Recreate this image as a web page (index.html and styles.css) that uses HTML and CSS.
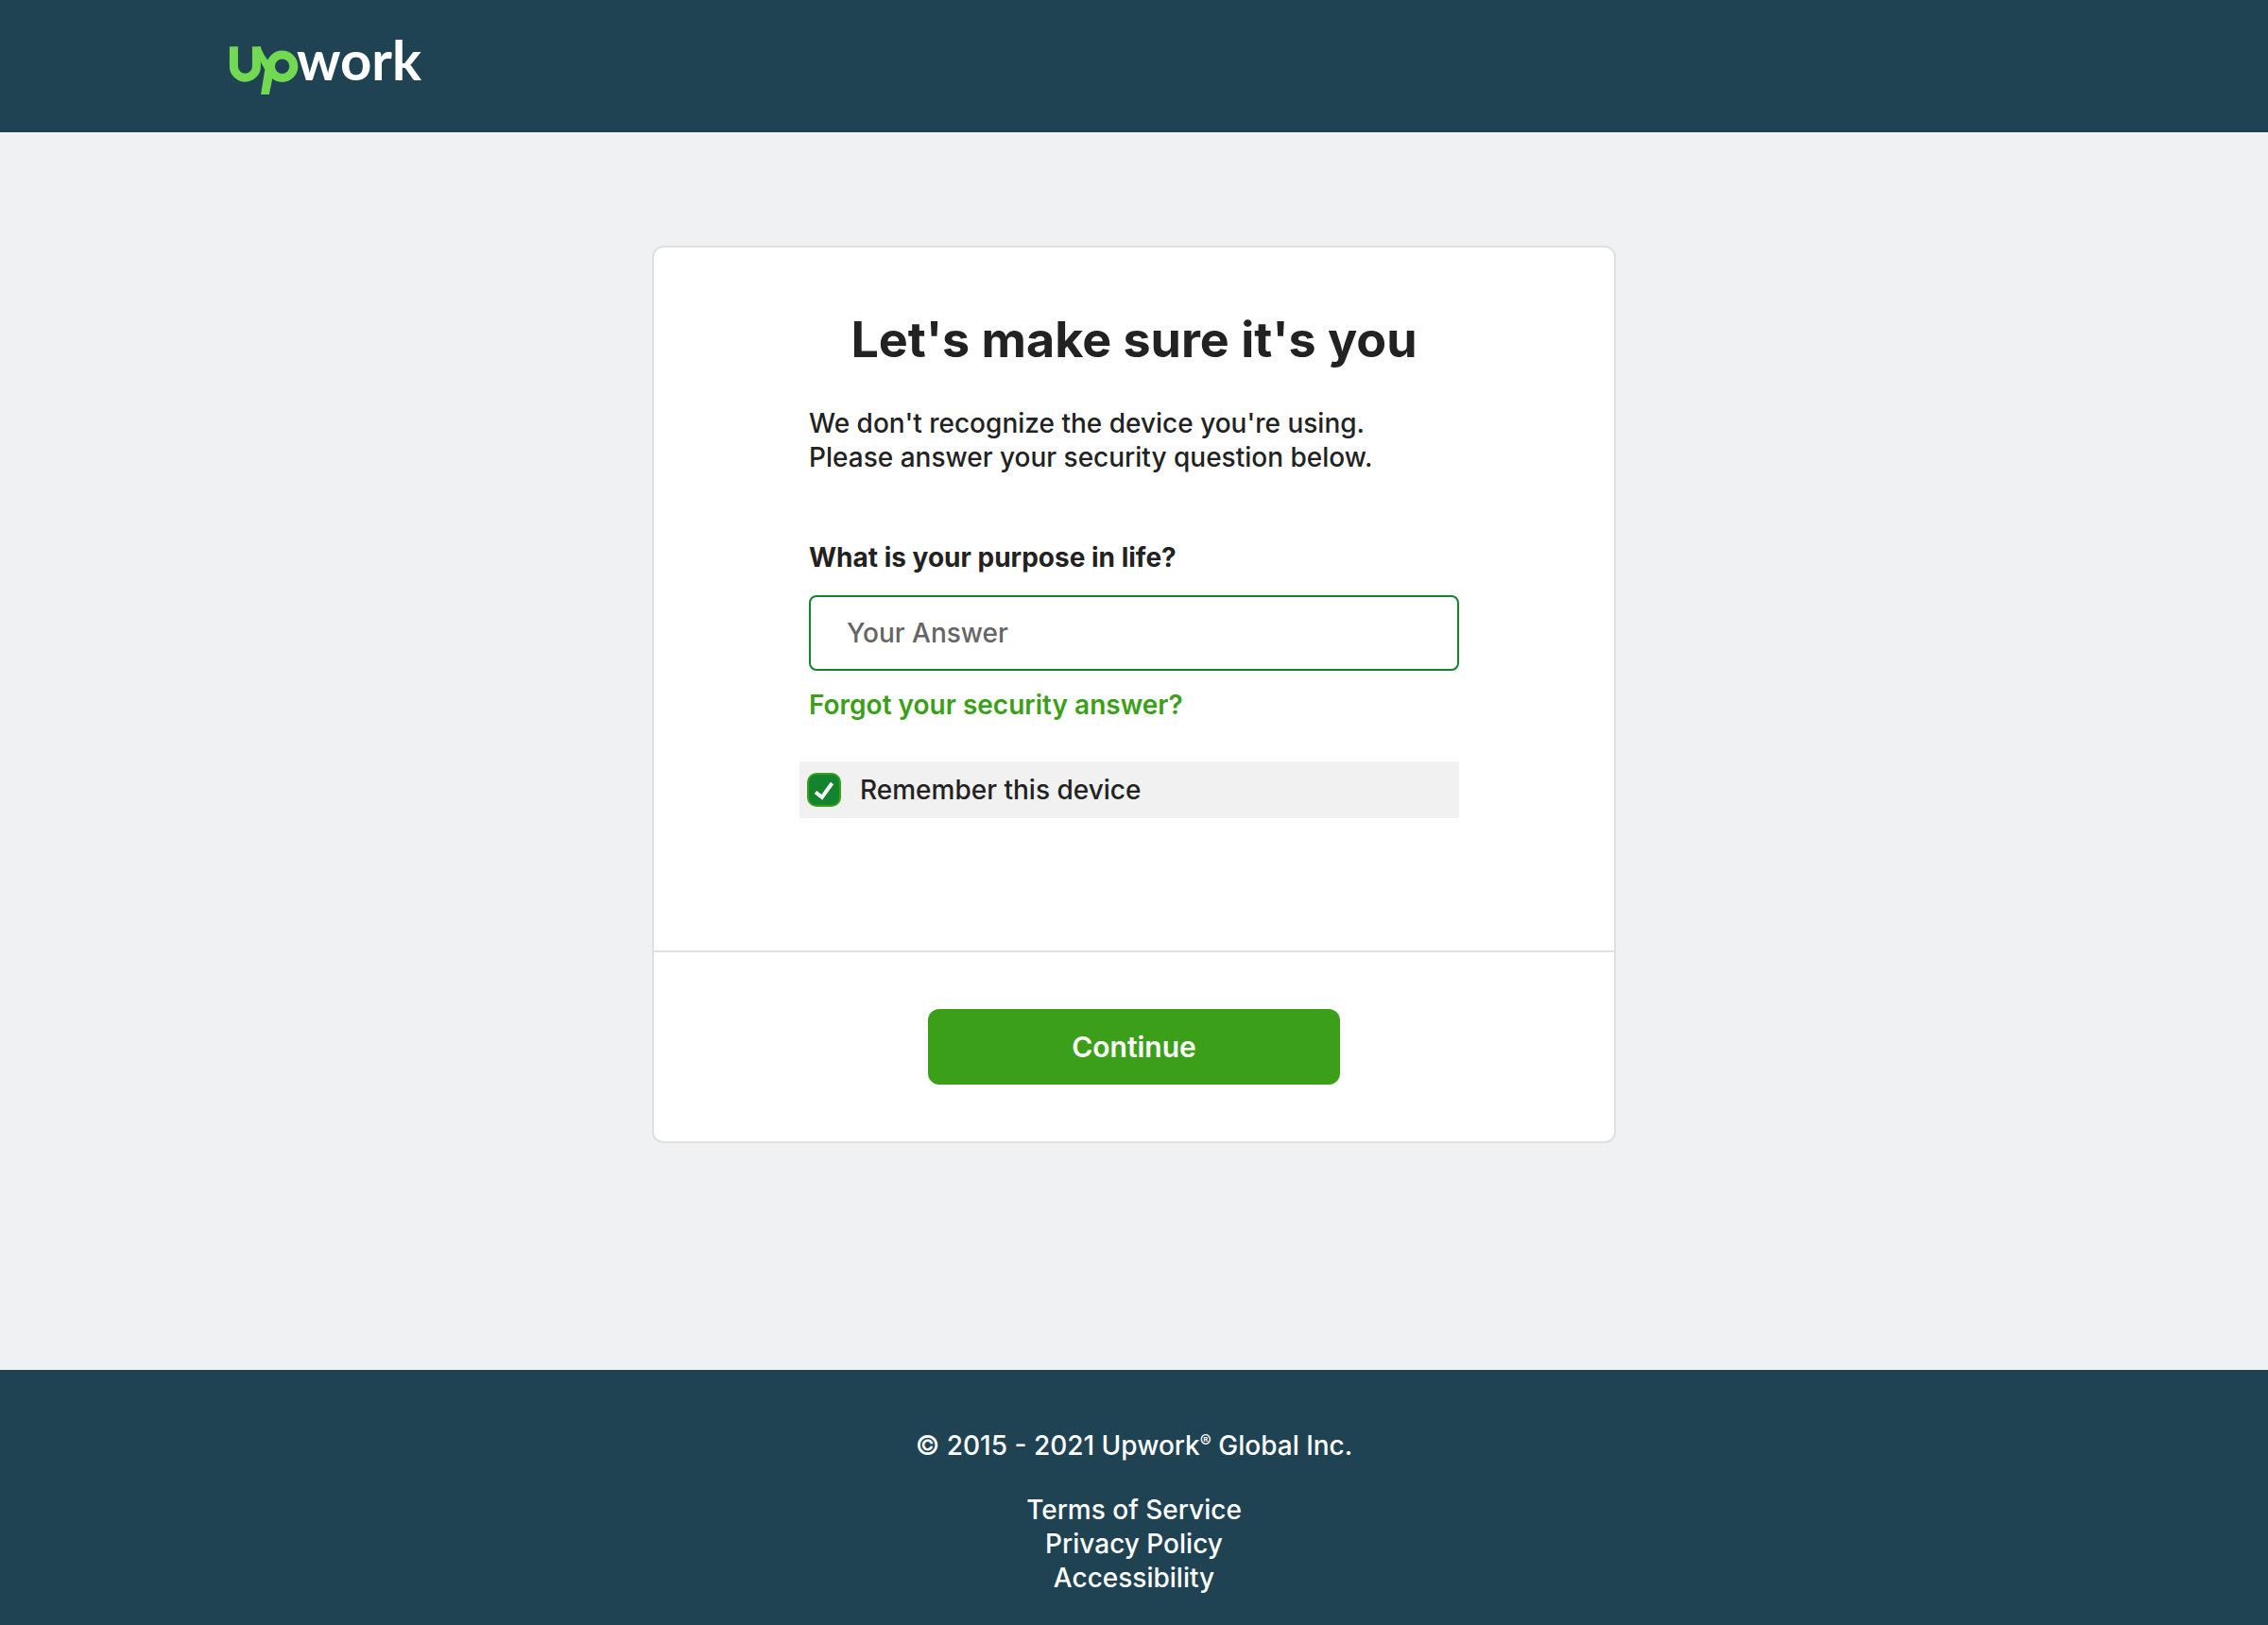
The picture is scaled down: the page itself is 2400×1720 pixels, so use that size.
FILE: index.html
```html
<!DOCTYPE html>
<html lang="en">
<head>
<meta charset="utf-8">
<meta name="viewport" content="width=device-width, initial-scale=1">
<title>Security question - Upwork</title>
<link rel="stylesheet" href="styles.css">
</head>
<body>
<header class="site-header">
  <a class="logo" href="#" aria-label="Upwork home">
    <svg class="logo-art" viewBox="0 0 204 62" width="204" height="62">
      <path class="logo-mark" d="M4.400 9.300V30.200a12 12 0 0 0 24 0V9.300"/>
      <circle class="logo-mark" cx="55.600" cy="30.200" r="12.200"/>
      <path class="logo-join" d="M30 9.300H32.500C34.500 15 37 19.500 40.200 23.500L46 24L47.500 34C46.500 37 46 39.500 45.500 42L41.800 60H33L37.300 33.500C35 30 33.500 26.500 31.800 22.500Z"/>
      <text class="logo-word" x="71" y="45">work</text>
    </svg>
  </a>
</header>
<main class="page">
  <form class="card">
    <div class="card-body">
      <h1 class="title">Let's make sure it's you</h1>
      <p class="intro">We don't recognize the device you're using.<br>Please answer your security question below.</p>
      <label class="question" for="answer">What is your purpose in life?</label>
      <input class="answer" id="answer" type="text" placeholder="Your Answer">
      <a class="forgot" href="#">Forgot your security answer?</a>
      <label class="remember" for="remember">
        <span class="tick">
          <input class="tick-box" id="remember" type="checkbox" checked>
          <svg class="tick-mark" viewBox="0 0 36 36" width="36" height="36"><path d="M9 20.500L15.800 25.800L26.500 11"/></svg>
        </span>
        <span>Remember this device</span>
      </label>
    </div>
    <div class="card-footer">
      <button class="continue" type="submit">Continue</button>
    </div>
  </form>
</main>
<footer class="site-footer">
  <p class="copyright">© 2015 - 2021 Upwork<span class="reg">®</span> Global Inc.</p>
  <nav class="links">
    <a href="#">Terms of Service</a>
    <a href="#">Privacy Policy</a>
    <a href="#">Accessibility</a>
  </nav>
</footer>
</body>
</html>
```
FILE: styles.css
```css
* { box-sizing: border-box; }

body {
  margin: 0;
  min-height: 100vh;
  display: flex;
  flex-direction: column;
  background: #f0f1f3;
  color: #222;
  font-family: Inter, "Open Sans", sans-serif;
  font-size: 28px;
  font-weight: 500;
  line-height: 36px;
}

.site-header {
  background: #204354;
  height: 140px;
  padding: 40px 10%;
}

.logo { display: inline-block; margin-left: 3px; }
.logo-art { display: block; overflow: visible; }
.logo-mark { fill: none; stroke: #73d852; stroke-width: 9; }
.logo-join { fill: #73d852; }
.logo-word { fill: #fff; font: 700 58px Lato, sans-serif; }

.page {
  flex: 1;
  padding: 120px 24px 240px;
}

.card {
  max-width: 1020px;
  margin: 0 auto;
  background: #fff;
  border: 2px solid #e0e0e0;
  border-radius: 12px;
}

.card-body {
  display: flex;
  flex-direction: column;
  padding: 68px 164px 140px;
}

.title {
  margin: 0;
  text-align: center;
  font-size: 52px;
  line-height: 60px;
  font-weight: 700;
}

.intro { margin: 40px 0 0; }

.question {
  margin-top: 70px;
  font-weight: 700;
}

.answer {
  width: 100%;
  height: 80px;
  margin-top: 22px;
  padding: 0 38px;
  border: 2px solid #14832e;
  border-radius: 8px;
  background: #fff;
  color: inherit;
  font: inherit;
}

.answer::placeholder { color: #656565; opacity: 1; }

.forgot {
  align-self: flex-start;
  margin-top: 18px;
  color: #3c9f1a;
  font-weight: 600;
  text-decoration: none;
}

.remember {
  display: flex;
  align-items: center;
  gap: 20px;
  height: 60px;
  margin: 42px 0 0 -10px;
  padding: 0 8px;
  background: #f1f1f1;
}

.tick { display: grid; }
.tick-box, .tick-mark { grid-area: 1 / 1; }

.tick-box {
  appearance: none;
  width: 36px;
  height: 36px;
  margin: 0;
  border: 2px solid #3c9f1a;
  border-radius: 10px;
}

.tick-box:checked { background: #14832e; }
.tick-mark { fill: none; stroke: #fff; stroke-width: 4; pointer-events: none; }

.card-footer {
  display: flex;
  justify-content: center;
  padding: 60px 24px;
  border-top: 2px solid #e0e0e0;
}

.continue {
  width: 436px;
  height: 80px;
  border: 0;
  border-radius: 12px;
  background: #3c9f1a;
  color: #fff;
  font: inherit;
  font-size: 30px;
  font-weight: 600;
}

.site-footer {
  padding: 62px 24px 32px;
  background: #204354;
  color: #fff;
  text-align: center;
}

.copyright { margin: 0; }
.reg { font-size: 18px; line-height: 1; vertical-align: 8px; }

.links {
  display: flex;
  flex-direction: column;
  align-items: center;
  margin-top: 32px;
}

.links a { color: inherit; text-decoration: none; }
```
